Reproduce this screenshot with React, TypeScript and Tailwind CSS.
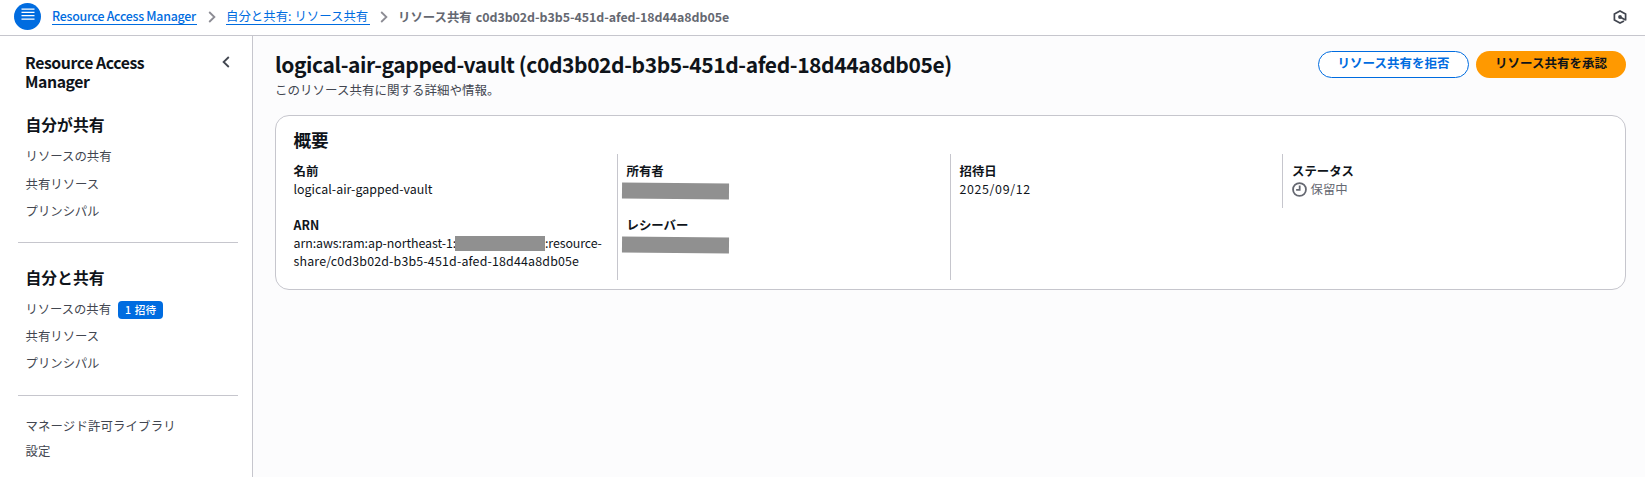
import React from "react";

function Chevron({ className = "" }: { className?: string }) {
  return (
    <svg viewBox="0 0 8 12" className={`h-3 w-2 ${className}`} fill="none" stroke="currentColor" strokeWidth="1.8">
      <path d="M1.2 1 6.4 6 1.2 11" />
    </svg>
  );
}

function NavItem({ children, className = "h-[27px]" }: { children: React.ReactNode; className?: string }) {
  return (
    <li className={`flex items-center ${className}`}>
      <a href="#" className="text-[12.4px] whitespace-nowrap text-[#424650]">{children}</a>
    </li>
  );
}

function Header() {
  return (
    <header className="flex h-9 shrink-0 items-center border-b border-[#c6c6cd] bg-white pb-0.5 pl-3.5">
      <button className="flex size-[27px] items-start justify-center rounded-full bg-[#006ce0] pt-[5px] text-white">
        <svg viewBox="0 0 14 12" className="ml-px h-3 w-3.5" fill="none" stroke="currentColor" strokeWidth="1.25">
          <path d="M.5 1h13M.5 4.4h13M.5 7.7h13M.5 11.2h13" />
        </svg>
      </button>
      <nav className="ml-[11px] flex items-center text-[12.4px] leading-4 whitespace-nowrap text-[#006ce0]">
        <a href="#" className="w-[145px] border-b border-[#006ce0] font-medium tracking-[-0.27px]">
          Resource Access Manager
        </a>
        <Chevron className="mr-[10px] ml-[11px] text-[#8c8c94]" />
        <a href="#" className="w-[144px] border-b border-[#006ce0] tracking-[0.03px]">自分と共有: リソース共有</a>
        <Chevron className="mr-[10px] ml-[10px] text-[#8c8c94]" />
        <span className="flex gap-1 font-bold text-[#656871]">
          <span>リソース共有</span>
          <span className="tracking-[-0.05px]">c0d3b02d-b3b5-451d-afed-18d44a8db05e</span>
        </span>
      </nav>
      <svg viewBox="0 0 14 14" className="mr-[18px] ml-auto size-3.5" fill="none" stroke="#424650" strokeWidth="1.7">
        <path d="M12.6 10.4V3.9L7 1 1.4 3.9v6.2L7 13l4-2.1" />
        <path d="M7 7l5.6 3" />
        <circle cx="7" cy="7" r="1.9" fill="#424650" stroke="none" />
      </svg>
    </header>
  );
}

function Sidebar() {
  return (
    <aside className="w-[253px] shrink-0 border-r border-[#c6c6cd] bg-white pt-[17px] pr-3.5 pl-[18px]">
      <div className="flex items-start justify-between pl-[7px]">
        <h2 className="w-[150px] text-[15.8px] leading-[19px] font-bold tracking-[-0.42px]">Resource Access Manager</h2>
        <Chevron className="mt-[3px] mr-[8px] rotate-180 text-[#424650]" />
      </div>
      <h3 className="mt-[24px] pl-[7.5px] text-[15.8px] leading-5 font-bold">自分が共有</h3>
      <ul className="mt-2 pl-[7.5px]">
        <NavItem className="mb-px h-[27px]">リソースの共有</NavItem>
        <NavItem>共有リソース</NavItem>
        <NavItem>プリンシパル</NavItem>
      </ul>
      <hr className="mt-[17px] border-[#c6c6cd]" />
      <h3 className="mt-[25px] pl-[7.5px] text-[15.8px] leading-5 font-bold">自分と共有</h3>
      <ul className="mt-2 pl-[7.5px]">
        <li className="flex h-[27px] items-center">
          <a href="#" className="text-[12.3px] text-[#424650]">リソースの共有</a>
          <span className="ml-[7px] flex h-[18px] w-[45px] items-center justify-center rounded bg-[#006ce0] text-[10.6px] font-medium [word-spacing:1.5px] text-white">
            1 招待
          </span>
        </li>
        <NavItem>共有リソース</NavItem>
        <NavItem>プリンシパル</NavItem>
      </ul>
      <hr className="mt-[18px] border-[#c6c6cd]" />
      <ul className="mt-[18px] pl-[7.5px]">
        <NavItem className="h-[25px] tracking-[0.15px]">マネージド許可ライブラリ</NavItem>
        <NavItem className="h-[25px]">設定</NavItem>
      </ul>
    </aside>
  );
}

function Field({ label, children }: { label: string; children: React.ReactNode }) {
  return (
    <div className="text-[12.4px] leading-[18px]">
      <div className="-mb-px leading-5 font-bold">{label}</div>
      {children}
    </div>
  );
}

function Redacted() {
  return <div className="mt-[3px] -ml-[4.5px] h-[15.5px] w-[107px] rotate-[0.6deg] bg-[#909090]" />;
}

function Summary() {
  return (
    <section className="mt-4 h-[175px] rounded-[14px] border border-[#c6c6cd] bg-white px-[9px] pt-[11px]">
      <h2 className="mb-0.5 pl-[8.5px] text-[17.6px] leading-[25px] font-bold">概要</h2>
      <div className="grid grid-cols-[332px_333px_332px_1fr] grid-rows-[54px_72px]">
        <div className="pt-[7px] pl-[8.5px]">
          <Field label="名前"><span className="tracking-[0.03px]">logical-air-gapped-vault</span></Field>
        </div>
        <div className="border-l border-[#c6c6cd] pt-[7px] pl-[8.5px]">
          <Field label="所有者"><Redacted /></Field>
        </div>
        <div className="border-l border-[#c6c6cd] pt-[7px] pl-[8.5px]">
          <Field label="招待日"><span className="tracking-[0.65px]">2025/09/12</span></Field>
        </div>
        <div className="border-l border-[#c6c6cd] pt-[7px] pl-[9px]">
          <Field label="ステータス">
            <span className="flex items-center gap-[3.5px] text-[#656871]">
              <svg viewBox="0 0 16 16" className="size-[15px]" fill="none" stroke="currentColor" strokeWidth="1.9">
                <circle cx="8" cy="8" r="6.9" />
                <path d="M8.2 3.8v4.6H4.4" />
              </svg>
              保留中
            </span>
          </Field>
        </div>
        <div className="pt-[7px] pl-[8.5px]">
          <Field label="ARN">
            <div className="flex items-center whitespace-nowrap">
              <span className="w-[161.5px] tracking-[-0.07px]">arn:aws:ram:ap-northeast-1:</span>
              <span className="h-[15px] w-[90px] bg-[#909090]" />
              <span className="tracking-[-0.1px]">:resource-</span>
            </div>
            <div className="tracking-[0.18px]">share/c0d3b02d-b3b5-451d-afed-18d44a8db05e</div>
          </Field>
        </div>
        <div className="border-l border-[#c6c6cd] pt-[7px] pl-[8.5px]">
          <Field label="レシーバー"><Redacted /></Field>
        </div>
        <div className="border-l border-[#c6c6cd]" />
      </div>
    </section>
  );
}

export default function App() {
  return (
    <div className="flex h-[477px] flex-col overflow-hidden bg-[#fcfcfd] font-['Noto_Sans_CJK_JP',sans-serif] text-[#0f141a]">
      <Header />
      <div className="flex min-h-0 flex-1">
        <Sidebar />
        <main className="min-w-0 flex-1 pt-[15px] pr-[19px] pl-[22px]">
          <div className="flex items-start justify-between">
            <div className="-mt-px">
              <h1 className="text-[21px] leading-7 font-bold tracking-[-0.4px] whitespace-nowrap">
                logical-air-gapped-vault (c0d3b02d-b3b5-451d-afed-18d44a8db05e)
              </h1>
              <p className="mt-[3px] text-[12.5px] leading-[18px] text-[#424650]">このリソース共有に関する詳細や情報。</p>
            </div>
            <div className="flex gap-[7px] text-[12.5px] font-bold whitespace-nowrap">
              <button className="flex h-[27px] w-[151px] items-center justify-center rounded-full border border-[#006ce0] bg-white pb-0.5 text-[#006ce0]">
                リソース共有を拒否
              </button>
              <button className="flex h-[27px] w-[150px] items-center justify-center rounded-full bg-[#ff9900] pb-0.5">
                リソース共有を承認
              </button>
            </div>
          </div>
          <Summary />
        </main>
      </div>
    </div>
  );
}
